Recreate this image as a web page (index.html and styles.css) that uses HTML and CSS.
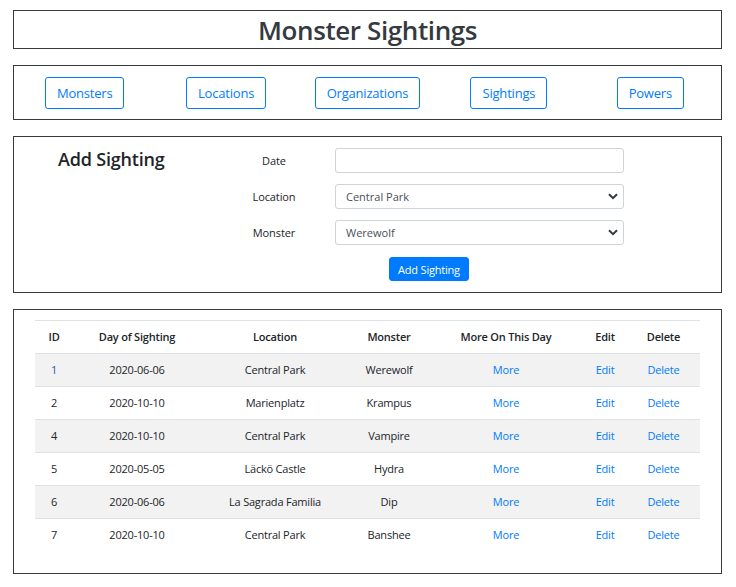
FILE: index.html
```html
<!DOCTYPE html>
<html lang="en">
<head>
<meta charset="utf-8">
<title>Monster Sightings</title>
<link rel="stylesheet" href="styles.css">
</head>
<body>
<div class="page">
  <header class="box title-box">
    <h1 class="title">Monster Sightings</h1>
  </header>

  <nav class="box nav-box">
    <div class="nav-cell"><a class="btn-outline" href="#">Monsters</a></div>
    <div class="nav-cell"><a class="btn-outline" href="#">Locations</a></div>
    <div class="nav-cell"><a class="btn-outline" href="#">Organizations</a></div>
    <div class="nav-cell"><a class="btn-outline" href="#">Sightings</a></div>
    <div class="nav-cell"><a class="btn-outline" href="#">Powers</a></div>
  </nav>

  <section class="box form-box">
    <h2 class="form-title">Add Sighting</h2>
    <form class="sighting-form">
      <label class="form-label" for="date">Date</label>
      <input class="form-input" id="date" type="text">
      <label class="form-label" for="location">Location</label>
      <select class="form-input form-select" id="location">
        <option>Central Park</option>
      </select>
      <label class="form-label" for="monster">Monster</label>
      <select class="form-input form-select" id="monster">
        <option>Werewolf</option>
      </select>
      <div class="form-actions">
        <button class="btn-primary" type="button">Add Sighting</button>
      </div>
    </form>
  </section>

  <section class="box table-box">
    <table class="sightings">
      <colgroup>
        <col class="c-id"><col class="c-day"><col class="c-loc"><col class="c-mon"><col class="c-more"><col class="c-edit"><col class="c-del">
      </colgroup>
      <thead>
        <tr><th>ID</th><th>Day of Sighting</th><th>Location</th><th>Monster</th><th>More On This Day</th><th>Edit</th><th>Delete</th></tr>
      </thead>
      <tbody>
        <tr><td class="id-first">1</td><td>2020-06-06</td><td>Central Park</td><td>Werewolf</td><td><a href="#">More</a></td><td><a href="#">Edit</a></td><td><a href="#">Delete</a></td></tr>
        <tr><td>2</td><td>2020-10-10</td><td>Marienplatz</td><td>Krampus</td><td><a href="#">More</a></td><td><a href="#">Edit</a></td><td><a href="#">Delete</a></td></tr>
        <tr><td>4</td><td>2020-10-10</td><td>Central Park</td><td>Vampire</td><td><a href="#">More</a></td><td><a href="#">Edit</a></td><td><a href="#">Delete</a></td></tr>
        <tr><td>5</td><td>2020-05-05</td><td>Läckö Castle</td><td>Hydra</td><td><a href="#">More</a></td><td><a href="#">Edit</a></td><td><a href="#">Delete</a></td></tr>
        <tr><td>6</td><td>2020-06-06</td><td>La Sagrada Familia</td><td>Dip</td><td><a href="#">More</a></td><td><a href="#">Edit</a></td><td><a href="#">Delete</a></td></tr>
        <tr><td>7</td><td>2020-10-10</td><td>Central Park</td><td>Banshee</td><td><a href="#">More</a></td><td><a href="#">Edit</a></td><td><a href="#">Delete</a></td></tr>
      </tbody>
    </table>
  </section>
</div>
</body>
</html>
```
FILE: styles.css
```css
* { box-sizing: border-box; }
html, body { margin: 0; padding: 0; background: #fff; }
body {
  font-family: "Open Sans", "Noto Sans", sans-serif;
  color: #212529;
  font-size: 12px;
}
.page {
  padding: 10px 14px 0 13px;
  display: flex;
  flex-direction: column;
  gap: 16px;
}
.box {
  border: 1px solid #343a40;
}
.title-box {
  height: 39px;
  display: flex;
  align-items: center;
  justify-content: center;
}
.title {
  margin: 0;
  font-size: 26px;
  font-weight: 600;
  color: #343a40;
  line-height: 1;
  letter-spacing: -0.4px;
}
.nav-box {
  height: 55px;
  display: grid;
  grid-template-columns: repeat(5, 1fr);
  align-items: start;
  padding-top: 11px;
}
.nav-cell {
  display: flex;
  justify-content: center;
}
.btn-outline {
  display: inline-flex;
  align-items: center;
  justify-content: center;
  height: 32px;
  padding: 0 11px;
  border: 1px solid #007bff;
  border-radius: 3px;
  color: #007bff;
  text-decoration: none;
  font-size: 13px;
  letter-spacing: -0.2px;
}
.form-box {
  height: 157px;
  display: grid;
  grid-template-columns: 220px 390px;
  align-content: start;
  align-items: start;
  padding: 11px 0 0 0;
}
.form-title {
  margin: 1px 0 0 44px;
  font-size: 18px;
  font-weight: 600;
  line-height: 1.2;
  letter-spacing: -0.2px;
}
.sighting-form {
  display: grid;
  grid-template-columns: 80px 289px;
  align-content: start;
  column-gap: 21px;
  row-gap: 11px;
  align-items: center;
}
.form-label {
  text-align: center;
  font-size: 11px;
  letter-spacing: -0.1px;
}
.form-input {
  height: 25px;
  border: 1px solid #ced4da;
  border-radius: 3px;
  background: #fff;
  font-family: inherit;
  font-size: 11px;
  color: #495057;
  padding: 0 10px;
  margin: 0;
}
.form-select {
  appearance: none;
  -webkit-appearance: none;
  background-image: url("data:image/svg+xml,%3Csvg xmlns='http://www.w3.org/2000/svg' width='10' height='7' viewBox='0 0 10 7'%3E%3Cpath d='M1 1.2 5 5.2 9 1.2' fill='none' stroke='%23343a40' stroke-width='2'/%3E%3C/svg%3E");
  background-repeat: no-repeat;
  background-position: right 5px center;
  background-size: 10px 7px;
}
.form-actions {
  grid-column: 1 / -1;
  display: flex;
  justify-content: center;
  margin-top: 1px;
}
.btn-primary {
  height: 24px;
  padding: 0 8px;
  border: 1px solid #007bff;
  background: #007bff;
  color: #fff;
  border-radius: 3px;
  font-family: inherit;
  font-size: 11px;
  letter-spacing: -0.2px;
}
.table-box {
  height: 265px;
  padding: 10px 21px 21px 21px;
}
.sightings {
  width: 665px;
  border-collapse: collapse;
  table-layout: fixed;
}
.c-id { width: 38px; }
.c-day { width: 128px; }
.c-loc { width: 148px; }
.c-mon { width: 80px; }
.c-more { width: 154px; }
.c-edit { width: 44px; }
.c-del { width: 73px; }
.sightings th, .sightings td {
  border-top: 1px solid #dee2e6;
  height: 33px;
  padding: 0 0 1px 0;
  text-align: center;
  vertical-align: middle;
  font-size: 11px;
  letter-spacing: -0.2px;
  white-space: nowrap;
}
.sightings th {
  font-weight: 600;
  color: #212529;
}
.sightings tbody tr:nth-child(odd) {
  background: #f2f2f2;
}
.sightings a {
  color: #007bff;
  text-decoration: none;
}
.sightings .id-first {
  color: #1d5fa8;
}
```
